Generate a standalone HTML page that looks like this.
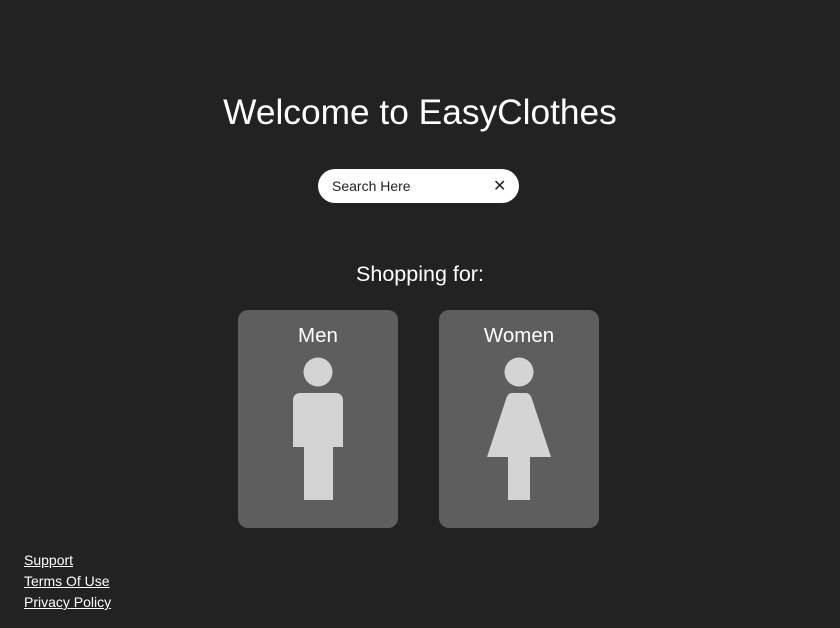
<!DOCTYPE html>
<html><head><style>
body{margin:0;width:840px;height:628px;background:#222;font-family:"Liberation Sans",sans-serif;color:#fff;position:relative;overflow:hidden}
.t{position:absolute;left:0;width:840px;text-align:center}
.card{position:absolute;top:310px;width:160px;height:218px;background:#5e5e5e;border-radius:10px}
.card div{position:absolute;top:14px;width:100%;text-align:center;font-size:20.5px}
.f{position:absolute;left:24px;font-size:14px;text-decoration:underline}
</style></head><body>
<div class="t" style="top:93px;font-size:35.3px">Welcome to EasyClothes</div>
<div style="position:absolute;left:318px;top:169px;width:201px;height:34px;background:#fff;border-radius:17px;color:#222;font-size:14px">
<span style="position:absolute;left:14px;top:9px">Search Here</span>
<span style="position:absolute;left:175px;top:7px;font-size:16px">✕</span></div>
<div class="t" style="top:262px;font-size:21.5px">Shopping for:</div>
<div class="card" style="left:238px"><div>Men</div></div>
<div class="card" style="left:439px"><div>Women</div></div>
<svg style="position:absolute;left:0;top:0" width="840" height="628">
<g fill="#d4d4d4">
<circle cx="318" cy="372" r="14.5"/>
<path d="M300 393h36a7 7 0 0 1 7 7v47h-10v53h-29v-53h-11v-47a7 7 0 0 1 7-7z"/>
<circle cx="519" cy="372" r="14.5"/>
<path d="M512 393h14q4 0 6 6l19 58h-21v43h-22v-43h-21l19-58q2-6 6-6z"/>
</g></svg>
<div class="f" style="top:552px">Support</div>
<div class="f" style="top:573px">Terms Of Use</div>
<div class="f" style="top:594px">Privacy Policy</div>
</body></html>
